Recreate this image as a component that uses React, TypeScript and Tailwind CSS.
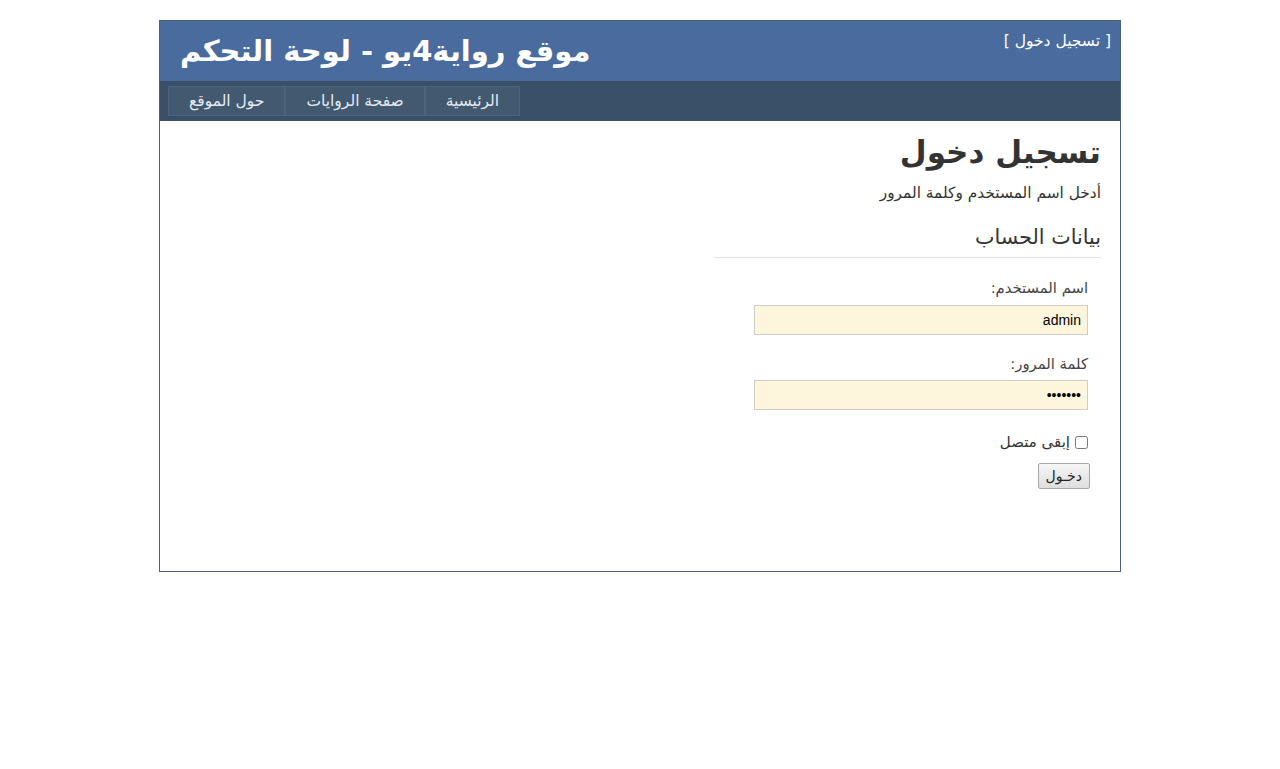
import { useState } from 'react';

const navLinks = ['الرئيسية', 'صفحة الروايات', 'حول الموقع'];

export default function App() {
  const [user, setUser] = useState('admin');
  const [pass, setPass] = useState('1234567');

  return (
    <div dir="rtl" className="min-h-screen bg-white pt-5 font-['DejaVu_Sans',sans-serif] text-[#333]">
      <div className="mx-auto w-[962px] border border-[#4b5f80]">
        <header className="flex h-[60px] items-start justify-between bg-[#4a6b9e] text-white">
          <a href="#" className="mr-[9px] mt-[10px] text-[15.5px] leading-5">
            [ تسجيل دخول ]
          </a>
          <h1 className="ml-5 mt-[10px] text-[29px] font-bold leading-10">موقع رواية4يو - لوحة التحكم</h1>
        </header>

        <nav className="flex h-10 items-start justify-end bg-[#3a5068] pl-2 pt-[5px]">
          {navLinks.map((link) => (
            <a
              key={link}
              href="#"
              className="h-[30px] border border-[#4d647d] bg-[#43596f] px-5 text-[15.5px] leading-[28px] text-[#e4ebf2]"
            >
              {link}
            </a>
          ))}
        </nav>

        <main className="h-[450px] px-[19px] pt-[10px]">
          <h2 className="text-[31px] font-bold leading-[42px] text-[#333]">تسجيل دخول</h2>
          <p className="mt-[10px] text-[15.4px] leading-5">أدخل اسم المستخدم وكلمة المرور</p>

          <form className="mt-5 w-[387px]" onSubmit={(e) => e.preventDefault()}>
            <h3 className="border-b border-[#e2e2e2] pb-[6px] text-[20.7px] leading-7">بيانات الحساب</h3>

            <div className="mr-[13px] mt-5">
              <label className="block text-[14.8px] leading-5 text-[#444]">اسم المستخدم:</label>
              <input
                value={user}
                onChange={(e) => setUser(e.target.value)}
                className="mt-[7px] block h-[30px] w-[334px] border border-[#ccc] bg-[#fdf5dc] px-[6px] font-['Liberation_Sans',sans-serif] text-[14px] text-black outline-none"
              />

              <label className="mt-[19px] block text-[14.8px] leading-5 text-[#444]">كلمة المرور:</label>
              <input
                type="password"
                value={pass}
                onChange={(e) => setPass(e.target.value)}
                className="mt-[6px] block h-[30px] w-[334px] border border-[#ccc] bg-[#fdf5dc] px-[6px] font-['Liberation_Sans',sans-serif] text-[14px] text-black outline-none"
              />

              <label className="mt-[22px] flex items-center gap-[5px] text-[15px] leading-5 text-[#333]">
                <input type="checkbox" className="h-[13px] w-[13px]" />
                إبقى متصل
              </label>
            </div>

            <button
              type="submit"
              className="mr-[11px] mt-[11px] h-[26px] rounded-[2px] border border-[#a8a8a8] bg-gradient-to-b from-[#f6f6f6] to-[#dddddd] px-[7px] text-[14px] leading-5 text-[#222]"
            >
              دخـول
            </button>
          </form>
        </main>
      </div>
    </div>
  );
}
